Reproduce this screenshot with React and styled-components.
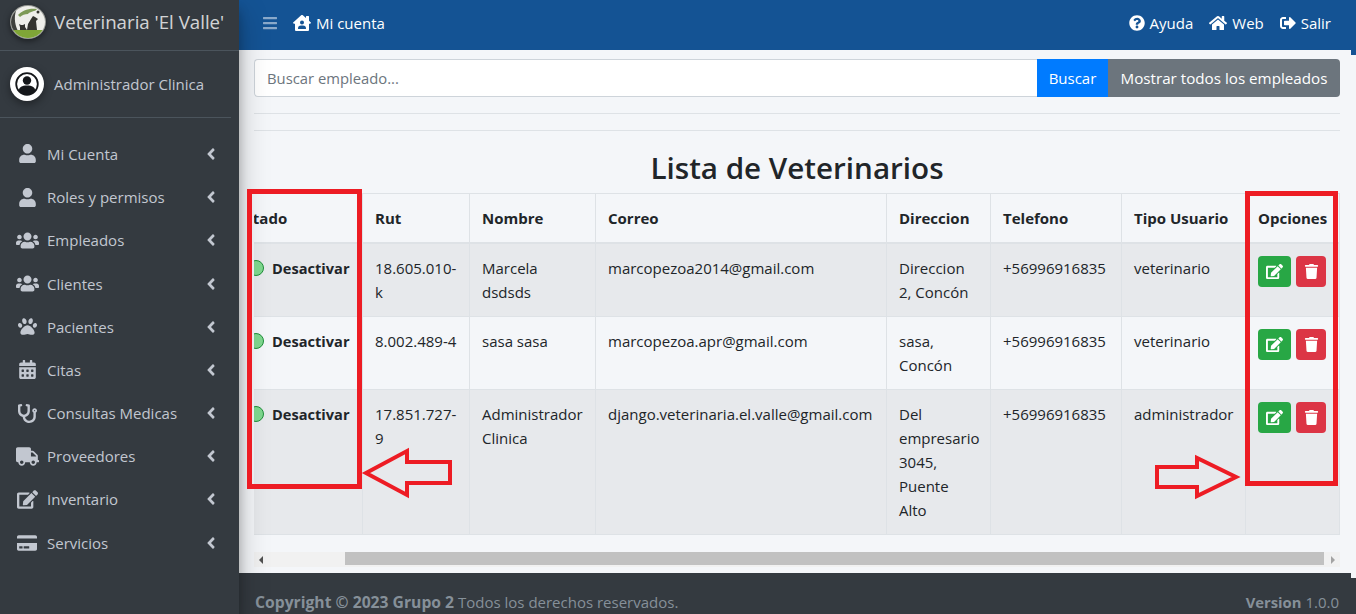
import React from "react";
import styled, { createGlobalStyle } from "styled-components";
import {
  FaUser, FaUsers, FaPaw, FaCalendarAlt, FaStethoscope, FaTruck, FaEdit, FaCreditCard,
  FaAngleLeft, FaBars, FaHouseUser, FaQuestionCircle, FaHome, FaSignOutAlt, FaTrash,
} from "react-icons/fa";

const FONT = `"Open Sans", "Noto Sans", "Liberation Sans", sans-serif`;

const Global = createGlobalStyle`
  html, body { margin: 0; padding: 0; height: 614px; overflow: hidden; }
  body { font-family: ${FONT}; font-size: 15px; color: #212529; background: #f4f6f9; }
  * { box-sizing: border-box; }
`;

const Page = styled.div`
  display: flex;
  position: relative;
  width: 1356px;
  height: 614px;
  overflow: hidden;
`;

/* sidebar */
const Sidebar = styled.aside`
  width: 239px;
  flex: none;
  background: #343a40;
  box-shadow: 0 14px 28px rgba(0, 0, 0, .25), 0 10px 10px rgba(0, 0, 0, .22);
  z-index: 3;
`;
const Brand = styled.div`
  height: 51px;
  display: flex;
  align-items: center;
  gap: 8px;
  padding: 0 0 7px 10px;
  border-bottom: 1px solid #4b545c;
  color: rgba(255, 255, 255, .8);
  font-size: 18.7px;
  white-space: nowrap;
`;
const UserPanel = styled.div`
  height: 67px;
  width: 231px;
  display: flex;
  align-items: center;
  gap: 10px;
  padding: 0 0 0 10px;
  border-bottom: 1px solid #4b545c;
  color: #c2c7d0;
  font-size: 15px;
`;
const Menu = styled.nav`
  padding-top: 14.4px;
`;
const MenuItem = styled.div`
  height: 43.2px;
  display: flex;
  align-items: center;
  color: #c2c7d0;
  font-size: 15px;
  padding-right: 19px;
  > svg { font-size: 18px; }
`;
const MenuIcon = styled.span`
  width: 47px;
  flex: none;
  display: flex;
  justify-content: center;
  padding-left: 14px;
  padding-right: 7px;
  font-size: ${p => p.$size}px;
`;
const MenuLabel = styled.span`
  flex: 1;
`;

/* main column */
const Main = styled.div`
  flex: 1;
  min-width: 0;
  display: flex;
  flex-direction: column;
`;
const Navbar = styled.header`
  height: 55px;
  flex: none;
  background: #145394;
  color: #fff;
  display: flex;
  justify-content: space-between;
  padding: 0 25px 10px 23px;
  font-size: 15px;
`;
const NavGroup = styled.div`
  display: flex;
  align-items: center;
  gap: ${p => p.$gap || 16}px;
`;
const NavLink = styled.span`
  display: flex;
  align-items: center;
  gap: 5px;
  font-size: 15px;
  svg { font-size: ${p => p.$icon || 16}px; }
`;
const Burger = styled.span`
  display: flex;
  font-size: 16px;
  color: rgba(255, 255, 255, .5);
`;
const Content = styled.main`
  height: 528px;
  flex: none;
  margin: -5px 5px 0 0;
  padding: 9px 11px 0 15px;
  background: #f4f6f9;
  border-bottom: 5px solid #343a40;
`;
const SearchRow = styled.div`
  display: flex;
  height: 38px;
`;
const SearchInput = styled.input`
  flex: 1;
  min-width: 0;
  height: 38px;
  padding: 0 12px;
  font: inherit;
  font-size: 14.8px;
  color: #495057;
  background: #fff;
  border: 1px solid #ced4da;
  border-right: 0;
  border-radius: 4px 0 0 4px;
  outline: none;
  &::placeholder { color: #6c757d; opacity: 1; }
`;
const SearchButton = styled.button`
  height: 38px;
  border: 0;
  padding: 0;
  font: inherit;
  font-size: ${p => p.$grey ? 15.2 : 15}px;
  color: #fff;
  background: ${p => p.$grey ? "#6c757d" : "#007bff"};
  border-radius: ${p => p.$grey ? "0 4px 4px 0" : "0"};
  width: ${p => p.$grey ? 232 : 71}px;
  white-space: nowrap;
`;
const Rule = styled.hr`
  margin: 16px 0 0;
  height: 1px;
  border: 0;
  background: #dee2e6;
`;
const Title = styled.h1`
  margin: 16px 0 4px;
  height: 42px;
  line-height: 42px;
  text-align: center;
  font-size: 29.6px;
  font-weight: 600;
  color: #212529;
`;
const TableBox = styled.div`
  overflow: hidden;
  height: 359px;
`;
const Table = styled.table`
  width: 1110px;
  margin-left: -25px;
  table-layout: fixed;
  border-collapse: collapse;
  font-size: 15px;
  line-height: 24px;
  th, td {
    padding: 12px;
    border: 1px solid #dee2e6;
    text-align: left;
    vertical-align: top;
  }
  th { border-bottom: 2px solid #dee2e6; font-weight: 700; white-space: nowrap; }
  th:first-child { padding-left: 7px; }
  tbody tr:nth-child(odd) { background: rgba(0, 0, 0, .05); }
`;
const StateCell = styled.div`
  display: flex;
  align-items: center;
  gap: 8px;
  height: 24px;
  padding-left: 6px;
  font-size: 14.6px;
  font-weight: 700;
  white-space: nowrap;
`;
const Dot = styled.span`
  width: 16px;
  height: 16px;
  flex: none;
  border-radius: 50%;
  background: #7fd88f;
  border: 1.5px solid #1f8f3a;
`;
const Actions = styled.div`
  display: flex;
  gap: 5px;
`;
const IconButton = styled.span`
  display: flex;
  align-items: center;
  justify-content: center;
  width: ${p => p.$danger ? 30 : 33}px;
  height: 31px;
  border-radius: 4px;
  color: #fff;
  font-size: ${p => p.$danger ? 15 : 17}px;
  background: ${p => p.$danger ? "#dc3545" : "#28a745"};
`;
const Scrollbar = styled.div`
  height: 15px;
  display: flex;
  align-items: center;
  background: #f1f1f1;
`;
const ScrollArrow = styled.span`
  width: 0;
  height: 0;
  margin: 0 5px;
  border-top: 4px solid transparent;
  border-bottom: 4px solid transparent;
  ${p => p.$right
    ? "border-left: 4px solid #a3a3a3;"
    : "border-right: 4px solid #505050;"}
`;
const ScrollTrack = styled.div`
  flex: 1;
  height: 100%;
  padding: 0 2px 2px 77px;
`;
const ScrollThumb = styled.div`
  height: 100%;
  background: #c1c1c1;
`;
const Footer = styled.footer`
  flex: 1;
  background: #343a40;
  color: #869099;
  display: flex;
  justify-content: space-between;
  padding: 13px 17px 0 16px;
  font-size: 15px;
  line-height: 22px;
`;
const Strong = styled.b`
  font-weight: 700;
  font-size: ${p => p.$size}px;
`;

/* red marks drawn over the screenshot */
const Mark = styled.div`
  position: absolute;
  border: 5px solid #ed1c24;
  left: ${p => p.$x}px;
  top: ${p => p.$y}px;
  width: ${p => p.$w}px;
  height: ${p => p.$h}px;
  z-index: 4;
`;
const ArrowSvg = styled.svg`
  position: absolute;
  left: 0;
  top: 0;
  z-index: 4;
  pointer-events: none;
`;

const Logo = () => (
  <svg width="36" height="34" viewBox="0 0 36 34" style={{ flex: "none", filter: "drop-shadow(0 2px 3px rgba(0,0,0,.5))" }}>
    <defs>
      <clipPath id="logoClip"><ellipse cx="18" cy="17" rx="17" ry="16" /></clipPath>
    </defs>
    <ellipse cx="18" cy="17" rx="18" ry="17" fill="#9a9c98" />
    <ellipse cx="18" cy="17" rx="17" ry="16" fill="#eeeeea" />
    <g clipPath="url(#logoClip)">
      <path d="M1 5 L7 3 C 4 10 4 18 8 26 L1 26Z" fill="#3f403d" />
      <rect x="0" y="25" width="36" height="9" fill="#7fa537" />
      <path d="M8 10 C 12 6 18 3 27 4 C 25 7 20 6 18 9 C 15 9 12 10 10 12Z" fill="#7d9a56" />
      <path d="M17 25 L18 19 L21 14 L23 11 L25 12 L28 14 L26 16 L27 25Z" fill="#33332f" />
      <path d="M10 25 L10 22 L9 19 L11 20 L13 20 L15 19 L15 22 L17 25Z" fill="#33332f" />
      <circle cx="28" cy="7" r="1.5" fill="#33332f" />
    </g>
  </svg>
);

const Avatar = () => (
  <svg width="34" height="34" viewBox="0 0 34 34" style={{ flex: "none", filter: "drop-shadow(0 3px 4px rgba(0,0,0,.4))" }}>
    <circle cx="17" cy="17" r="17" fill="#fff" />
    <circle cx="17" cy="17" r="10.8" fill="none" stroke="#15171a" strokeWidth="1.8" />
    <circle cx="17" cy="13.5" r="4.2" fill="#15171a" />
    <path d="M8.8 24 C 9 20 12 18.6 17 18.6 C 22 18.6 25 20 25.2 24 A 11 11 0 0 1 8.8 24Z" fill="#15171a" />
  </svg>
);

const menu = [
  [FaUser, "Mi Cuenta", 19],
  [FaUser, "Roles y permisos", 19],
  [FaUsers, "Empleados", 23],
  [FaUsers, "Clientes", 23],
  [FaPaw, "Pacientes", 19],
  [FaCalendarAlt, "Citas", 19],
  [FaStethoscope, "Consultas Medicas", 19],
  [FaTruck, "Proveedores", 23],
  [FaEdit, "Inventario", 21],
  [FaCreditCard, "Servicios", 20],
];

const columns = [
  ["Estado", 133], ["Rut", 107], ["Nombre", 126], ["Correo", 291],
  ["Direccion", 104], ["Telefono", 131], ["Tipo Usuario", 124], ["Opciones", 94],
];

const rows = [
  { rut: "18.605.010-k", name: "Marcela dsdsds", mail: "marcopezoa2014@gmail.com", addr: "Direccion 2, Concón", tipo: "veterinario" },
  { rut: "8.002.489-4", name: "sasa sasa", mail: "marcopezoa.apr@gmail.com", addr: "sasa, Concón", tipo: "veterinario" },
  { rut: "17.851.727-9", name: "Administrador Clinica", mail: "django.veterinaria.el.valle@gmail.com", addr: "Del empresario 3045, Puente Alto", tipo: "administrador" },
];

export default function App() {
  return (
    <Page>
      <Global />
      <Sidebar>
        <Brand><Logo />Veterinaria 'El Valle'</Brand>
        <UserPanel><Avatar />Administrador Clinica</UserPanel>
        <Menu>
          {menu.map(([Icon, label, size]) => (
            <MenuItem key={label}>
              <MenuIcon $size={size}><Icon /></MenuIcon>
              <MenuLabel>{label}</MenuLabel>
              <FaAngleLeft />
            </MenuItem>
          ))}
        </Menu>
      </Sidebar>

      <Main>
        <Navbar>
          <NavGroup $gap={15}>
            <Burger><FaBars /></Burger>
            <NavLink $icon={18}><FaHouseUser />Mi cuenta</NavLink>
          </NavGroup>
          <NavGroup $gap={16}>
            <NavLink><FaQuestionCircle />Ayuda</NavLink>
            <NavLink $icon={18}><FaHome />Web</NavLink>
            <NavLink><FaSignOutAlt />Salir</NavLink>
          </NavGroup>
        </Navbar>

        <Content>
          <SearchRow>
            <SearchInput placeholder="Buscar empleado..." readOnly />
            <SearchButton>Buscar</SearchButton>
            <SearchButton $grey>Mostrar todos los empleados</SearchButton>
          </SearchRow>
          <Rule />
          <Rule />
          <Title>Lista de Veterinarios</Title>
          <TableBox>
            <Table>
              <colgroup>
                {columns.map(([name, width]) => <col key={name} width={width} />)}
              </colgroup>
              <thead>
                <tr>{columns.map(([name]) => <th key={name}>{name}</th>)}</tr>
              </thead>
              <tbody>
                {rows.map(r => (
                  <tr key={r.rut}>
                    <td><StateCell><Dot />Desactivar</StateCell></td>
                    <td>{r.rut}</td>
                    <td>{r.name}</td>
                    <td>{r.mail}</td>
                    <td>{r.addr}</td>
                    <td>+56996916835</td>
                    <td>{r.tipo}</td>
                    <td>
                      <Actions>
                        <IconButton><FaEdit /></IconButton>
                        <IconButton $danger><FaTrash /></IconButton>
                      </Actions>
                    </td>
                  </tr>
                ))}
              </tbody>
            </Table>
          </TableBox>
          <Scrollbar>
            <ScrollArrow />
            <ScrollTrack><ScrollThumb /></ScrollTrack>
            <ScrollArrow $right />
          </Scrollbar>
        </Content>

        <Footer>
          <span><Strong $size={15.7}>Copyright © 2023 Grupo 2</Strong> Todos los derechos reservados.</span>
          <span><Strong $size={14.8}>Version</Strong> 1.0.0</span>
        </Footer>
      </Main>

      <Mark $x={247} $y={189} $w={115} $h={300} />
      <Mark $x={1245} $y={191} $w={93} $h={295} />
      <ArrowSvg width="1356" height="614" viewBox="0 0 1356 614">
        <path d="M366 473 L407 451 L407 462 L450 462 L450 483 L407 483 L407 495Z" fill="none" stroke="#ed1c24" strokeWidth="4" />
        <path d="M1157 467 L1197 467 L1197 458 L1236 477 L1197 496 L1197 487 L1157 487Z" fill="none" stroke="#ed1c24" strokeWidth="4" />
      </ArrowSvg>
    </Page>
  );
}
